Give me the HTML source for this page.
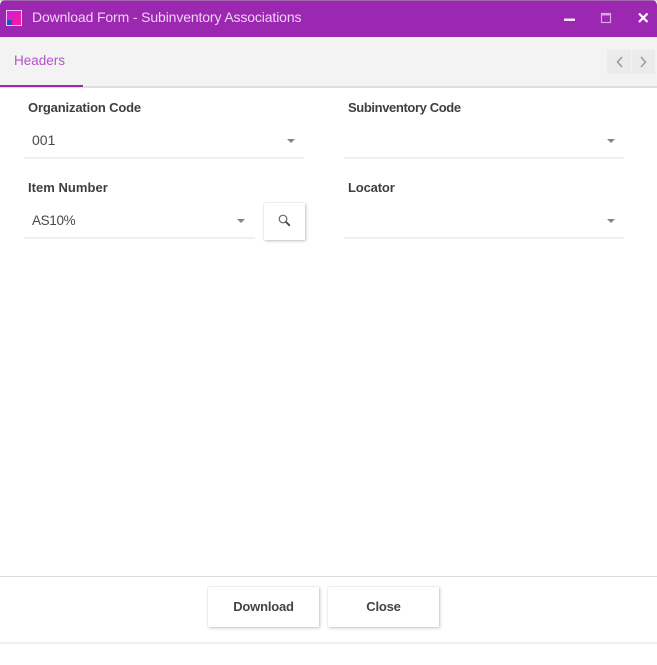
<!DOCTYPE html>
<html>
<head>
<meta charset="utf-8">
<style>
html,body{margin:0;padding:0;background:#fff;}
body{width:657px;height:665px;position:relative;overflow:hidden;font-family:"Liberation Sans",sans-serif;}
.a{position:absolute;white-space:nowrap;}
.lbl{font-size:13px;font-weight:bold;color:#3f3f3f;line-height:16px;letter-spacing:-.15px;}
.val{font-size:14px;color:#484848;line-height:16px;}
.line{position:absolute;height:2px;background:#f0f0f0;}
.caret{position:absolute;width:0;height:0;border-left:4.5px solid transparent;border-right:4.5px solid transparent;border-top:4.5px solid #858585;}
.btn{position:absolute;background:#fff;box-shadow:1px 1px 3px rgba(0,0,0,.22),0 0 1px rgba(0,0,0,.18);text-align:center;font-size:13px;font-weight:bold;color:#444;letter-spacing:-.2px;}
</style>
</head>
<body>
<div class="a" style="left:0;top:0;width:657px;height:37px;background:#9c27b0;border-radius:5px 5px 0 0;"></div>
<div class="a" style="left:0;top:0;width:657px;height:1px;background:#a9a9a9;opacity:.5;"></div>
<div class="a" style="left:6px;top:10px;width:14px;height:14px;border:1px solid #f0c4ee;background:linear-gradient(135deg,#c81ee8,#ff1a90);"></div>
<div class="a" style="left:7px;top:20px;width:5px;height:5px;background:#1556c8;"></div>
<div class="a" style="left:32px;top:9px;font-size:14px;line-height:16px;color:#efd3f4;letter-spacing:-.13px;">Download Form - Subinventory Associations</div>
<svg class="a" style="left:555px;top:5px;" width="102" height="26" viewBox="0 0 102 26">
<rect x="9" y="13.500" width="11" height="2.500" fill="#f5e6f8"/>
<rect x="46.500" y="8.500" width="9" height="9" fill="none" stroke="#d9a6e2" stroke-width="1.200"/>
<rect x="46" y="8" width="10" height="2.500" fill="#d9a6e2"/>
<path d="M84 8.500l8.500 8.500M92.500 8.500l-8.500 8.500" stroke="#fff" stroke-width="2.200" fill="none"/>
</svg>

<div class="a" style="left:0;top:37px;width:657px;height:49px;background:#f3f3f3;"></div>
<div class="a" style="left:0;top:86px;width:657px;height:2px;background:#dfdfdf;"></div>
<div class="a" style="left:0;top:85px;width:83px;height:2px;background:#9c27b0;"></div>
<div class="a" style="left:14px;top:53px;font-size:13.500px;line-height:16px;color:#b552c6;">Headers</div>
<div class="a" style="left:607px;top:50px;width:24px;height:24px;background:#ebebeb;"></div>
<div class="a" style="left:632px;top:50px;width:23px;height:24px;background:#ebebeb;"></div>
<svg class="a" style="left:607px;top:50px;" width="48" height="24" viewBox="0 0 48 24">
<path d="M15 7l-4.500 5 4.500 5" fill="none" stroke="#9a9a9a" stroke-width="1.500"/>
<path d="M34 7l4.500 5-4.500 5" fill="none" stroke="#9a9a9a" stroke-width="1.500"/>
</svg>

<div class="a lbl" style="left:28px;top:100px;">Organization Code</div>
<div class="a val" style="left:32px;top:132px;">001</div>
<div class="caret" style="left:287px;top:139px;"></div>
<div class="line" style="left:24px;top:157px;width:280px;"></div>

<div class="a lbl" style="left:348px;top:100px;letter-spacing:-.38px;">Subinventory Code</div>
<div class="caret" style="left:607px;top:139px;"></div>
<div class="line" style="left:344px;top:157px;width:280px;"></div>

<div class="a lbl" style="left:28px;top:180px;letter-spacing:.03px;">Item Number</div>
<div class="a val" style="left:32px;top:213px;font-size:13.500px;letter-spacing:-.35px;">AS10%</div>
<div class="caret" style="left:237px;top:219px;"></div>
<div class="line" style="left:24px;top:237px;width:231px;"></div>

<div class="btn" style="left:264px;top:203px;width:41px;height:37px;"></div>
<svg class="a" style="left:277px;top:213px;" width="15" height="15" viewBox="0 0 15 15">
<circle cx="6" cy="6" r="3.800" fill="none" stroke="#666" stroke-width="1.200"/>
<path d="M8.800 8.800l4 4" stroke="#33415c" stroke-width="1.800"/>
</svg>

<div class="a lbl" style="left:348px;top:180px;">Locator</div>
<div class="caret" style="left:607px;top:219px;"></div>
<div class="line" style="left:344px;top:237px;width:280px;"></div>

<div class="a" style="left:0;top:576px;width:657px;height:1px;background:#dcdcdc;"></div>
<div class="btn" style="left:208px;top:587px;width:111px;height:40px;line-height:40px;">Download</div>
<div class="btn" style="left:328px;top:587px;width:111px;height:40px;line-height:40px;">Close</div>
<div class="a" style="left:0;top:642px;width:657px;height:2px;background:#efefef;"></div>
</body>
</html>
